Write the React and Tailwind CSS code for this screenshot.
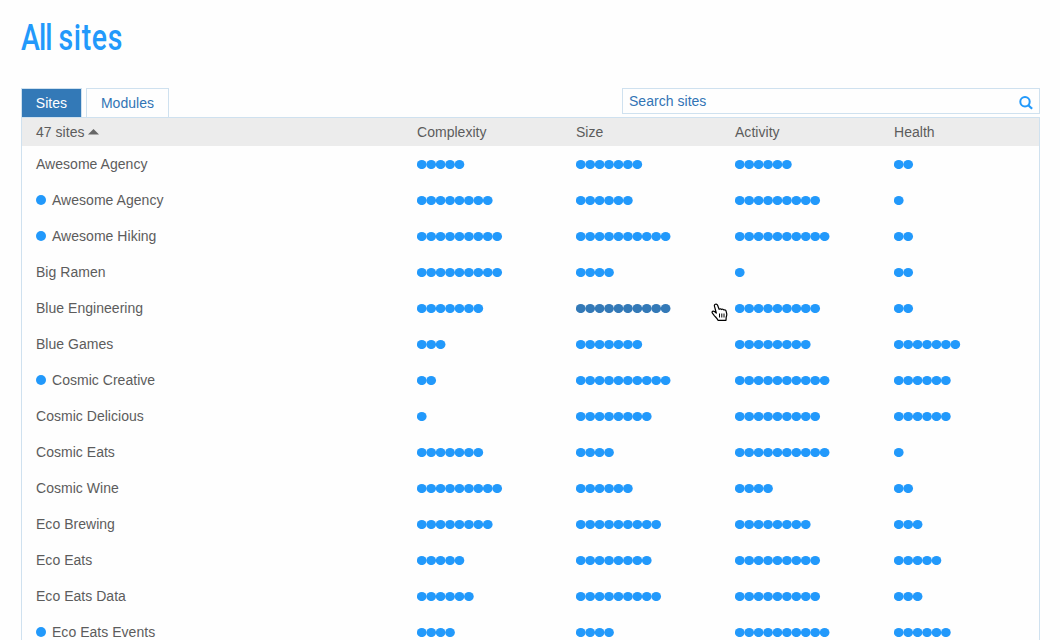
const SITES = [
  { name: 'Awesome Agency', scores: [5, 7, 6, 2] },
  { name: 'Awesome Agency', marked: true, scores: [8, 6, 9, 1] },
  { name: 'Awesome Hiking', marked: true, scores: [9, 10, 10, 2] },
  { name: 'Big Ramen', scores: [9, 4, 1, 2] },
  { name: 'Blue Engineering', scores: [7, 10, 9, 2], active: 1 },
  { name: 'Blue Games', scores: [3, 7, 8, 7] },
  { name: 'Cosmic Creative', marked: true, scores: [2, 10, 10, 6] },
  { name: 'Cosmic Delicious', scores: [1, 8, 9, 6] },
  { name: 'Cosmic Eats', scores: [7, 4, 10, 1] },
  { name: 'Cosmic Wine', scores: [9, 6, 4, 2] },
  { name: 'Eco Brewing', scores: [8, 9, 8, 3] },
  { name: 'Eco Eats', scores: [5, 8, 9, 5] },
  { name: 'Eco Eats Data', scores: [6, 9, 9, 3] },
  { name: 'Eco Eats Events', marked: true, scores: [4, 4, 10, 6] },
];

const GRID = 'grid grid-cols-[381px_159px_159px_159px_1fr] pl-[14px]';

function Dots({ count, active }) {
  return (
    <svg width="100" height="10" viewBox="0 0 100 10" className={active ? 'text-[#3379b7]' : 'text-[#2299fb]'}>
      {Array.from({ length: count }, (_, i) => (
        <ellipse key={i} cx={4.75 + i * 9.43} cy="5.5" rx="4.85" ry="4.6" fill="currentColor" />
      ))}
    </svg>
  );
}

function Pointer() {
  return (
    <svg className="absolute left-[711px] top-[303px]" width="17" height="19" viewBox="0 0 17 19">
      <path
        d="M4.3 1.3c1-.4 1.900 0 2.300 1l1.500 4c.8-.7 1.800-.6 2.400.2.9-.6 1.800-.3 2.300.5 1.200-.4 2 .2 2.300 1.200l.6 2.500c.3 1.300-.1 2.300-.5 3.400l-.2 3.200H7c-.6-1.700-2.100-2.900-3.500-4.500L1.400 10.200c-.7-.9-.2-2 .9-2 1.200 0 2.100.9 3 1.800L3.500 3.400c-.3-.9 0-1.700.8-2.100Z"
        fill="white"
        stroke="black"
        strokeWidth="1.2"
        strokeLinejoin="round"
      />
      <path d="M8.500 10.500v4M10.800 10.500v4M13 10.500v4" stroke="black" fill="none" />
    </svg>
  );
}

export default function App() {
  return (
    <div className="relative flex h-[640px] w-[1060px] flex-col overflow-hidden bg-[#fefefe] pl-[21px] pr-5 font-['Liberation_Sans',Arial,sans-serif] text-[14px] leading-5 tracking-[0.03px] text-[#5c5c5c]">
      <h1 className="mt-4 h-[72px] w-40 shrink-0 origin-left scale-x-[0.79] whitespace-nowrap font-[Roboto,sans-serif] text-[36px] font-medium leading-[44px] tracking-normal text-[#2299fb]">
        <span className="tracking-[-1.2px]">All</span> <span className="tracking-[0.8px]">sites</span>
      </h1>
      <div className="flex h-[29px] shrink-0 items-start justify-between">
        <div className="flex gap-1">
          <button className="h-[29px] w-[61px] border border-b-0 border-[#cfe1ef] bg-[#3379b7] text-white">Sites</button>
          <button className="h-[29px] w-[83px] border border-b-0 border-[#cfe1ef] text-[#3274b5]">Modules</button>
        </div>
        <div className="flex h-[26px] w-[418px] items-center justify-between border border-[#cfe1ef] pl-[6px] pr-[6px] text-[#3274b5]">
          <span>Search sites</span>
          <svg width="14" height="14" viewBox="0 0 14 14" className="mt-1" fill="none" stroke="#2299fb">
            <circle cx="6" cy="5.8" r="4.7" strokeWidth="2" />
            <path d="M9.300 9.200l3.800 3.600" strokeWidth="2.2" />
          </svg>
        </div>
      </div>
      <div className="h-[540px] shrink-0 border border-b-0 border-[#cfe1ef]">
        <div className={`${GRID} h-7 items-center bg-[#ececec]`}>
          <div className="flex items-center gap-[3px]">
            47 sites
            <svg width="11" height="6" viewBox="0 0 11 6">
              <path d="M0 5.500L5.500 0L11 5.500Z" fill="#666" />
            </svg>
          </div>
          <div>Complexity</div>
          <div>Size</div>
          <div>Activity</div>
          <div>Health</div>
        </div>
        {SITES.map((site, index) => (
          <div key={index} className={`${GRID} h-9 items-center`}>
            <div className="flex items-center gap-[6px]">
              {site.marked && <span className="size-[10px] rounded-full bg-[#2299fb]" />}
              {site.name}
            </div>
            {site.scores.map((score, column) => (
              <Dots key={column} count={score} active={site.active === column} />
            ))}
          </div>
        ))}
      </div>
      <Pointer />
    </div>
  );
}
